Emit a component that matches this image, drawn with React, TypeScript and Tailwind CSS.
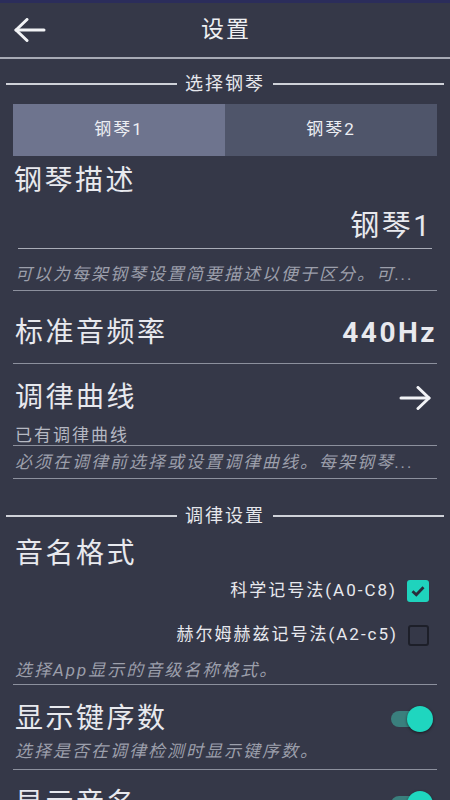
import type React from "react";

const FONT = "font-['Roboto','Noto_Sans_CJK_SC',sans-serif]";
const BIG = "text-[28px] tracking-[2.5px]";

function ArrowIcon({ dir }: { dir: "left" | "right" }): React.JSX.Element {
  return (
    <svg
      className={dir === "right" ? "h-[24px] w-[32px] -scale-x-100" : "h-[24px] w-[32px]"}
      fill="none"
      stroke="#f2f3f6"
      strokeLinecap="round"
      strokeLinejoin="round"
      strokeWidth="3"
      viewBox="0 0 32 24"
    >
      <path d="M2 12H30" />
      <path d="M13 1.5L2 12L13 22.5" />
    </svg>
  );
}

function SectionTitle({ label }: { label: string }): React.JSX.Element {
  return (
    <div className="flex h-[20px] items-center gap-[8px] px-[6px]">
      <div className="h-[1.5px] flex-1 bg-[#cfd1d8]" />
      <span className="text-[18px] leading-[20px] tracking-[2px] text-[#e6e7ec]">{label}</span>
      <div className="h-[1.5px] flex-1 bg-[#cfd1d8]" />
    </div>
  );
}

function Hint({ children }: { children: React.ReactNode }): React.JSX.Element {
  return <p className="truncate text-[17px] italic leading-[20px] tracking-[2px] text-[#9c9fab]">{children}</p>;
}

function Toggle(): React.JSX.Element {
  return (
    <div className="relative h-[26px] w-[42px]">
      <div className="absolute left-0 top-[5px] h-[16px] w-[32px] rounded-full bg-[#3a7f7d]" />
      <div className="absolute right-0 top-0 h-[26px] w-[26px] rounded-full bg-[#1fd6bf] shadow-[0_1px_3px_rgba(0,0,0,0.55)]" />
    </div>
  );
}

function Checkbox({ checked }: { checked: boolean }): React.JSX.Element {
  if (checked) {
    return (
      <span className="flex h-[22px] w-[22px] items-center justify-center rounded-[3px] bg-[#1fd3bd]">
        <svg className="h-[16px] w-[16px]" fill="none" stroke="#2a2d3b" strokeWidth="2.8" viewBox="0 0 16 16">
          <path d="M2.5 8.2L6.3 11.8L13.5 4.2" />
        </svg>
      </span>
    );
  }
  return <span className="h-[21px] w-[21px] rounded-[3px] border-[2.5px] border-[#1d1f29] bg-[#353848]" />;
}

export default function App(): React.JSX.Element {
  return (
    <div className={`${FONT} h-[800px] w-[450px] overflow-hidden bg-[#353848] text-[#e8e9ee]`}>
      <div className="h-[3px] bg-[#2b2d5b]" />
      <header className="relative flex h-[54px] items-center justify-center">
        <button className="absolute left-[14px] top-[15px]" type="button">
          <ArrowIcon dir="left" />
        </button>
        <h1 className="pl-[2px] text-[23px] leading-[28px] tracking-[2px] text-[#eeeff2]">设置</h1>
      </header>
      <div className="h-[2px] bg-[#a7aab5]" />

      <div className="pt-[15px] pb-[10px]">
        <SectionTitle label="选择钢琴" />
      </div>

      <div className="mx-[13px] flex h-[52px]">
        <button className="flex-1 bg-[#6e748e] text-[17px] tracking-[2px] text-[#eceef3]" type="button">
          钢琴1
        </button>
        <button className="flex-1 bg-[#4f556a] text-[17px] tracking-[2px] text-[#eceef3]" type="button">
          钢琴2
        </button>
      </div>

      <div className={`flex h-[50px] items-center px-[14px] ${BIG}`}>钢琴描述</div>
      <div className="mx-[18px] flex h-[43px] items-center justify-end border-b border-[#a9acb7] text-[29px] tracking-[2.5px]">钢琴1</div>
      <div className="mx-[13px] flex h-[42px] items-center border-b border-[#8c909d] pt-[8px] pl-[2px] pr-[6px]">
        <Hint>可以为每架钢琴设置简要描述以便于区分。可...</Hint>
      </div>

      <div className="mx-[13px] flex h-[73px] items-center justify-between border-b border-[#8c909d] pt-[12px] pl-[2px]">
        <span className={BIG}>标准音频率</span>
        <span className="text-[28px] font-bold tracking-[2.5px]">440Hz</span>
      </div>

      <div className="mx-[13px] border-b border-[#8c909d] pt-[19px] pl-[2px]">
        <div className="flex h-[30px] items-center justify-between">
          <span className={BIG}>调律曲线</span>
          <span className="mr-[6px]">
            <ArrowIcon dir="right" />
          </span>
        </div>
        <p className="mt-[12px] text-[17px] leading-[20px] tracking-[2px] text-[#b6b9c3]">已有调律曲线</p>
      </div>
      <div className="mx-[13px] flex h-[33px] items-center border-b border-[#8c909d] pl-[2px] pr-[6px]">
        <Hint>必须在调律前选择或设置调律曲线。每架钢琴...</Hint>
      </div>

      <div className="pt-[27px]">
        <SectionTitle label="调律设置" />
      </div>

      <div className="mx-[13px] border-b border-[#8c909d] pl-[2px] pb-[4px]">
        <div className={`mt-[13px] flex h-[30px] items-center ${BIG}`}>音名格式</div>
        <div className="mt-[11px] flex h-[22px] items-center justify-end gap-[10px] pr-[8px]">
          <span className="text-[17px] tracking-[2px]">科学记号法(A0-C8)</span>
          <Checkbox checked />
        </div>
        <div className="mt-[22px] flex h-[22px] items-center justify-end gap-[10px] pr-[8px]">
          <span className="text-[17px] tracking-[2px]">赫尔姆赫兹记号法(A2-c5)</span>
          <Checkbox checked={false} />
        </div>
        <div className="mt-[14px]">
          <Hint>选择App显示的音级名称格式。</Hint>
        </div>
      </div>

      <div className="mx-[13px] border-b border-[#8c909d] pt-[19px] pb-[8px] pl-[2px]">
        <div className="flex h-[30px] items-center justify-between pr-[4px]">
          <span className={BIG}>显示键序数</span>
          <Toggle />
        </div>
        <div className="mt-[7px]">
          <Hint>选择是否在调律检测时显示键序数。</Hint>
        </div>
      </div>

      <div className="mx-[13px] pt-[19px] pl-[2px]">
        <div className="flex h-[30px] items-center justify-between pr-[4px]">
          <span className={BIG}>显示音名</span>
          <Toggle />
        </div>
      </div>
    </div>
  );
}
